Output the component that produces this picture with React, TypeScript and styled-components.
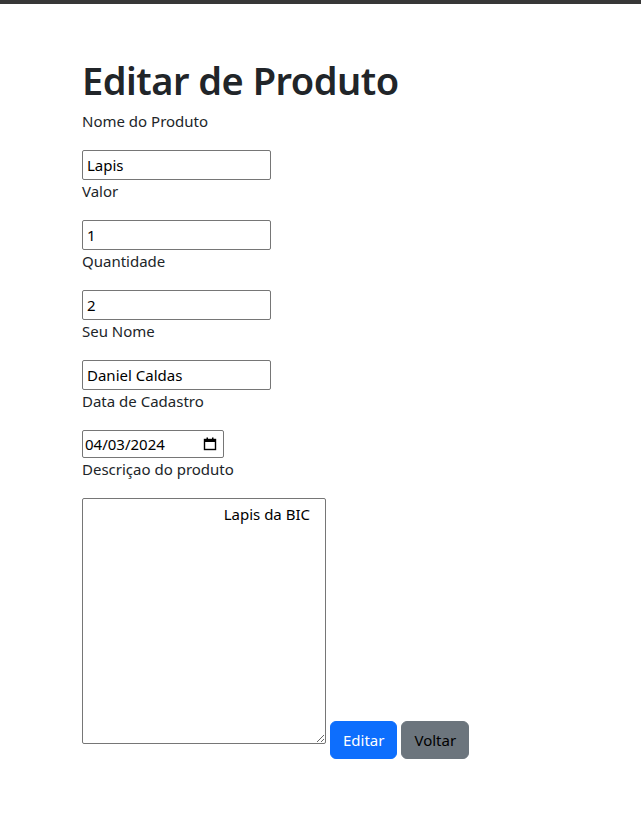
import React, { useState } from 'react';
import styled, { createGlobalStyle } from 'styled-components';

const GlobalStyle = createGlobalStyle`
  *, *::before, *::after { box-sizing: border-box; }
  body {
    margin: 0;
    background: #fff;
    color: #212529;
    font-family: "Noto Sans", "Open Sans", "Liberation Sans", sans-serif;
    font-size: 16px;
    line-height: 1.5;
  }
`;

const TopBar = styled.div`
  height: 4px;
  background: #373737;
`;

const Page = styled.main`
  padding: 50px 0 40px 82px;
`;

const Title = styled.h1`
  margin: 2px 0 6px;
  font-size: 38px;
  font-weight: 600;
  line-height: 48px;
  letter-spacing: -0.5px;
`;

const Form = styled.form`
  display: flex;
  flex-direction: column;
  align-items: flex-start;
`;

const Label = styled.label`
  display: block;
  height: 24px;
  margin-bottom: 16px;
  font-size: 15px;
`;

const TextInput = styled.input<{ $width?: number }>`
  width: ${p => p.$width ?? 189}px;
  height: 30px;
  padding: 1px 4px;
  border: 1px solid #767676;
  border-radius: 2px;
  font-family: inherit;
  font-size: 15px;
  color: #000;
  background: #fff;
  outline: none;
`;

const DateBox = styled.div`
  display: flex;
  align-items: center;
  width: 142px;
  height: 28px;
  padding: 0 6px 0 2px;
  border: 1px solid #767676;
  border-radius: 2px;
`;

const DateInput = styled.input`
  flex: 1;
  min-width: 0;
  border: none;
  padding: 0;
  font-family: inherit;
  font-size: 15px;
  color: #000;
  outline: none;
  background: transparent;
`;

const BottomRow = styled.div`
  display: flex;
  align-items: flex-start;
  gap: 4px;
`;

const Description = styled.textarea`
  width: 244px;
  height: 246px;
  padding: 5px 15px 2px 4px;
  border: 1px solid #767676;
  border-radius: 2px;
  font-family: inherit;
  font-size: 15px;
  color: #000;
  text-align: right;
  outline: none;
`;

const Button = styled.button<{ $variant: 'primary' | 'secondary' }>`
  margin-top: 223px;
  height: 38px;
  padding: 6px 12px;
  border: 1px solid ${p => (p.$variant === 'primary' ? '#0d6efd' : '#6c757d')};
  border-radius: 6px;
  background: ${p => (p.$variant === 'primary' ? '#0d6efd' : '#6c757d')};
  color: ${p => (p.$variant === 'primary' ? '#fff' : '#000')};
  font-family: inherit;
  font-size: 15px;
  line-height: 24px;
  cursor: pointer;
`;

const CalendarIcon = () => (
  <svg width="14" height="14" viewBox="0 0 14 14" aria-hidden="true">
    <rect x="1.5" y="2.5" width="11" height="10" fill="none" stroke="#000" strokeWidth="1.4" />
    <rect x="1" y="2" width="12" height="3" fill="#000" />
    <rect x="3.5" y="0.5" width="1.5" height="2.5" fill="#000" />
    <rect x="9" y="0.5" width="1.5" height="2.5" fill="#000" />
  </svg>
);

export default function App() {
  const [nome, setNome] = useState('Lapis');
  const [valor, setValor] = useState('1');
  const [quantidade, setQuantidade] = useState('2');
  const [seuNome, setSeuNome] = useState('Daniel Caldas');
  const [data, setData] = useState('04/03/2024');
  const [descricao, setDescricao] = useState('Lapis da BIC');

  return (
    <>
      <GlobalStyle />
      <TopBar />
      <Page>
        <Title>Editar de Produto</Title>
        <Form onSubmit={e => e.preventDefault()}>
          <Label htmlFor="nome">Nome do Produto</Label>
          <TextInput id="nome" value={nome} onChange={e => setNome(e.target.value)} />
          <Label htmlFor="valor">Valor</Label>
          <TextInput id="valor" value={valor} onChange={e => setValor(e.target.value)} />
          <Label htmlFor="quantidade">Quantidade</Label>
          <TextInput id="quantidade" value={quantidade} onChange={e => setQuantidade(e.target.value)} />
          <Label htmlFor="seuNome">Seu Nome</Label>
          <TextInput id="seuNome" value={seuNome} onChange={e => setSeuNome(e.target.value)} />
          <Label htmlFor="data">Data de Cadastro</Label>
          <DateBox>
            <DateInput id="data" value={data} onChange={e => setData(e.target.value)} />
            <CalendarIcon />
          </DateBox>
          <Label htmlFor="descricao">Descriçao do produto</Label>
          <BottomRow>
            <Description id="descricao" value={descricao} onChange={e => setDescricao(e.target.value)} />
            <Button type="submit" $variant="primary">Editar</Button>
            <Button type="button" $variant="secondary">Voltar</Button>
          </BottomRow>
        </Form>
      </Page>
    </>
  );
}
